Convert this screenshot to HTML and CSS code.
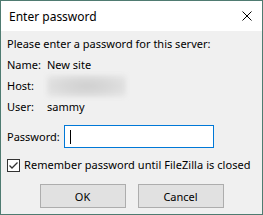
FILE: index.html
```html
<!DOCTYPE html>
<html>
<head>
<meta charset="utf-8">
<link rel="stylesheet" href="styles.css">
</head>
<body>
<div class="window">
  <div class="titlebar">
    <span class="title">Enter password</span>
    <svg class="close" width="10" height="10" viewBox="0 0 10 10"><path d="M0.5 0.5 L9.5 9.5 M9.5 0.5 L0.5 9.5" stroke="#000" stroke-width="1" fill="none"/></svg>
  </div>
  <div class="content">
    <div class="intro">Please enter a password for this server:</div>
    <div class="info">
      <span class="label">Name:</span><span class="value">New site</span>
      <span class="label">Host:</span><span class="value"><span class="blur"></span></span>
      <span class="label">User:</span><span class="value">sammy</span>
    </div>
    <div class="pwrow">
      <span class="pwlabel">Password:</span>
      <div class="input"><span class="caret"></span></div>
    </div>
    <div class="checkrow">
      <span class="checkbox"><svg width="11" height="11" viewBox="0 0 11 11"><path d="M1.5 5.5 L4 8 L9.5 2.5" stroke="#333" stroke-width="1.3" fill="none"/></svg></span>
      <span class="checklabel">Remember password until FileZilla is closed</span>
    </div>
    <div class="buttons">
      <div class="btn">OK</div>
      <div class="btn">Cancel</div>
    </div>
  </div>
</div>
</body>
</html>
```
FILE: styles.css
```css
html, body {
  margin: 0;
  padding: 0;
  background: #ffffff;
}
body {
  font-family: "Noto Sans", "DejaVu Sans", sans-serif;
  font-size: 11px;
  color: #000;
  white-space: nowrap;
}
.window {
  width: 263px;
  height: 215px;
  box-sizing: border-box;
  border: 1px solid #4f7b71;
  background: #f0f0f0;
  display: flex;
  flex-direction: column;
}
.titlebar {
  height: 30px;
  background: #fff;
  display: flex;
  align-items: center;
  justify-content: space-between;
  padding: 0 10px 0 8px;
}
.title {
  font-size: 12px;
  line-height: 16px;
  margin-top: 1px;
}
.close {
  display: block;
  margin-top: 0;
}
.content {
  padding: 0 6px;
  display: flex;
  flex-direction: column;
}
.intro {
  margin-top: 5px;
  line-height: 16px;
}
.info {
  margin-top: 2px;
  display: grid;
  grid-template-columns: 40px 1fr;
  grid-auto-rows: 21px;
  line-height: 21px;
}
.value {
  display: flex;
  align-items: center;
}
.blur {
  display: block;
  width: 79px;
  height: 22px;
  background: radial-gradient(ellipse at center, #cfcfcf 0%, #d9d9d9 45%, #e9e9e9 100%);
  filter: blur(2px);
}
.pwrow {
  margin-top: 8px;
  display: flex;
  align-items: center;
}
.pwlabel {
  width: 57px;
  line-height: 16px;
}
.input {
  width: 150px;
  height: 23px;
  box-sizing: border-box;
  border: 1px solid #0078d7;
  background: #fff;
  display: flex;
  align-items: center;
  padding-left: 5px;
}
.caret {
  display: block;
  width: 1px;
  height: 14px;
  background: #000;
}
.checkrow {
  margin-top: 9px;
  height: 16px;
  display: flex;
  align-items: center;
  gap: 4px;
}
.checkbox {
  width: 13px;
  height: 13px;
  box-sizing: border-box;
  border: 1px solid #333;
  background: #fff;
  display: flex;
  align-items: center;
  justify-content: center;
}
.checkbox svg {
  display: block;
}
.checklabel {
  line-height: 16px;
  letter-spacing: 0.05px;
}
.buttons {
  margin-top: 11px;
  display: flex;
  justify-content: center;
  gap: 12px;
}
.btn {
  width: 86px;
  height: 24px;
  box-sizing: border-box;
  border: 1px solid #adadad;
  background: #e1e1e1;
  display: flex;
  align-items: center;
  justify-content: center;
}
```
